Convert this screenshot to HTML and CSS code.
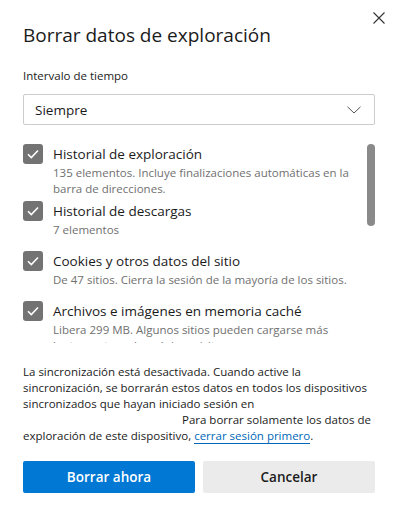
FILE: index.html
```html
<!DOCTYPE html>
<html lang="es">
<head>
    <meta charset="UTF-8">
    <meta name="viewport" content="width=device-width, initial-scale=1.0">
    <title>Borrar datos de exploración</title>
    <link rel="stylesheet" href="styles.css">
</head>
<body>

<div class="dialog">
    <div class="dialog-head">
        <h1>Borrar datos de exploración</h1>
        <button class="close" aria-label="Cerrar">
            <svg width="12" height="12" viewBox="0 0 12 12"><path d="M0.5 0.5 L11.5 11.5 M11.5 0.5 L0.5 11.5" stroke="#333" stroke-width="1.1" fill="none"/></svg>
        </button>
    </div>

    <div class="field-label">Intervalo de tiempo</div>
    <div class="select">
        <span>Siempre</span>
        <svg width="14" height="8" viewBox="0 0 14 8"><path d="M0.5 0.8 L7 7 L13.5 0.8" stroke="#555" stroke-width="1" fill="none"/></svg>
    </div>

    <div class="scroll-area">
        <div class="items">
            <div class="item">
                <span class="check"><svg width="12" height="10" viewBox="0 0 12 10"><path d="M1 5.2 L4.3 8.5 L11 1.5" stroke="#fff" stroke-width="1.6" fill="none"/></svg></span>
                <div class="item-text">
                    <div class="item-title">Historial de exploración</div>
                    <div class="item-desc">135 elementos. Incluye finalizaciones automáticas en la barra de direcciones.</div>
                </div>
            </div>
            <div class="item">
                <span class="check"><svg width="12" height="10" viewBox="0 0 12 10"><path d="M1 5.2 L4.3 8.5 L11 1.5" stroke="#fff" stroke-width="1.6" fill="none"/></svg></span>
                <div class="item-text">
                    <div class="item-title">Historial de descargas</div>
                    <div class="item-desc">7 elementos</div>
                </div>
            </div>
            <div class="item">
                <span class="check"><svg width="12" height="10" viewBox="0 0 12 10"><path d="M1 5.2 L4.3 8.5 L11 1.5" stroke="#fff" stroke-width="1.6" fill="none"/></svg></span>
                <div class="item-text">
                    <div class="item-title">Cookies y otros datos del sitio</div>
                    <div class="item-desc">De 47 sitios. Cierra la sesión de la mayoría de los sitios.</div>
                </div>
            </div>
            <div class="item">
                <span class="check"><svg width="12" height="10" viewBox="0 0 12 10"><path d="M1 5.2 L4.3 8.5 L11 1.5" stroke="#fff" stroke-width="1.6" fill="none"/></svg></span>
                <div class="item-text">
                    <div class="item-title">Archivos e imágenes en memoria caché</div>
                    <div class="item-desc">Libera 299 MB. Algunos sitios pueden cargarse más lentamente en la próxima visita.</div>
                </div>
            </div>
        </div>
        <div class="scrollbar"><div class="thumb"></div></div>
    </div>

    <p class="sync-note">
        La sincronización está desactivada. Cuando active la sincronización, se borrarán estos datos en todos los dispositivos sincronizados que hayan iniciado sesión en <span class="account"></span> Para borrar solamente los datos de exploración de este dispositivo, <a href="#">cerrar sesión primero</a>.
    </p>

    <div class="actions">
        <button class="btn btn-primary">Borrar ahora</button>
        <button class="btn btn-secondary">Cancelar</button>
    </div>
</div>

</body>
</html>
```

FILE: styles.css
```css
body {
    margin: 0;
    font-family: "Open Sans", "Noto Sans", Arial, sans-serif;
    background-color: #ffffff;
    color: #1b1b1b;
}

.dialog {
    padding: 0 19px 0 23px;
}

.dialog-head {
    display: flex;
    justify-content: space-between;
    align-items: flex-start;
}

h1 {
    margin: 21px 0 0 0;
    font-size: 19px;
    font-weight: 400;
    line-height: 28px;
    color: #1b1b1b;
}

.close {
    border: none;
    background: none;
    padding: 0;
    margin: 12px -10px 0 0;
    width: 12px;
    height: 12px;
    cursor: pointer;
    line-height: 0;
}

.field-label {
    margin-top: 19px;
    font-size: 11.5px;
    line-height: 16px;
    color: #1b1b1b;
}

.select {
    margin-top: 10px;
    height: 29px;
    border: 1px solid #cccccc;
    border-radius: 2px;
    display: flex;
    align-items: center;
    justify-content: space-between;
    padding: 0 13px 0 11px;
    font-size: 13.5px;
}

.scroll-area {
    margin-top: 19px;
    height: 199px;
    overflow: hidden;
    display: flex;
}

.items {
    flex: 1;
}

.item {
    display: flex;
    gap: 10px;
    min-height: 46px;
    padding-bottom: 4px;
}

.check {
    flex: none;
    width: 20px;
    height: 20px;
    border-radius: 3px;
    background-color: #737373;
    display: flex;
    align-items: center;
    justify-content: center;
}

.item-text {
    padding-right: 14px;
}

.item-title {
    font-size: 13.5px;
    line-height: 20px;
    color: #1b1b1b;
}

.item-desc {
    margin-top: 1px;
    font-size: 11.5px;
    line-height: 16px;
    color: #707070;
}

.scrollbar {
    flex: none;
    width: 8px;
}

.thumb {
    height: 82px;
    border-radius: 4px;
    background-color: #8a8a8a;
}

.sync-note {
    margin: 21px 0 0 0;
    font-size: 11.5px;
    line-height: 16px;
    color: #1b1b1b;
}

.account {
    display: inline-block;
    width: 156px;
    height: 10px;
}

.sync-note a {
    color: #0067b8;
    text-decoration: none;
    border-bottom: 1px solid #0067b8;
}

.actions {
    display: flex;
    gap: 8px;
    margin-top: 17px;
}

.btn {
    flex: 1;
    height: 32px;
    border: none;
    border-radius: 2px;
    font-family: inherit;
    font-size: 13.5px;
    font-weight: 600;
    cursor: pointer;
}

.btn-primary {
    background-color: #0078d4;
    color: #ffffff;
}

.btn-secondary {
    background-color: #ebebeb;
    color: #1b1b1b;
}
```
